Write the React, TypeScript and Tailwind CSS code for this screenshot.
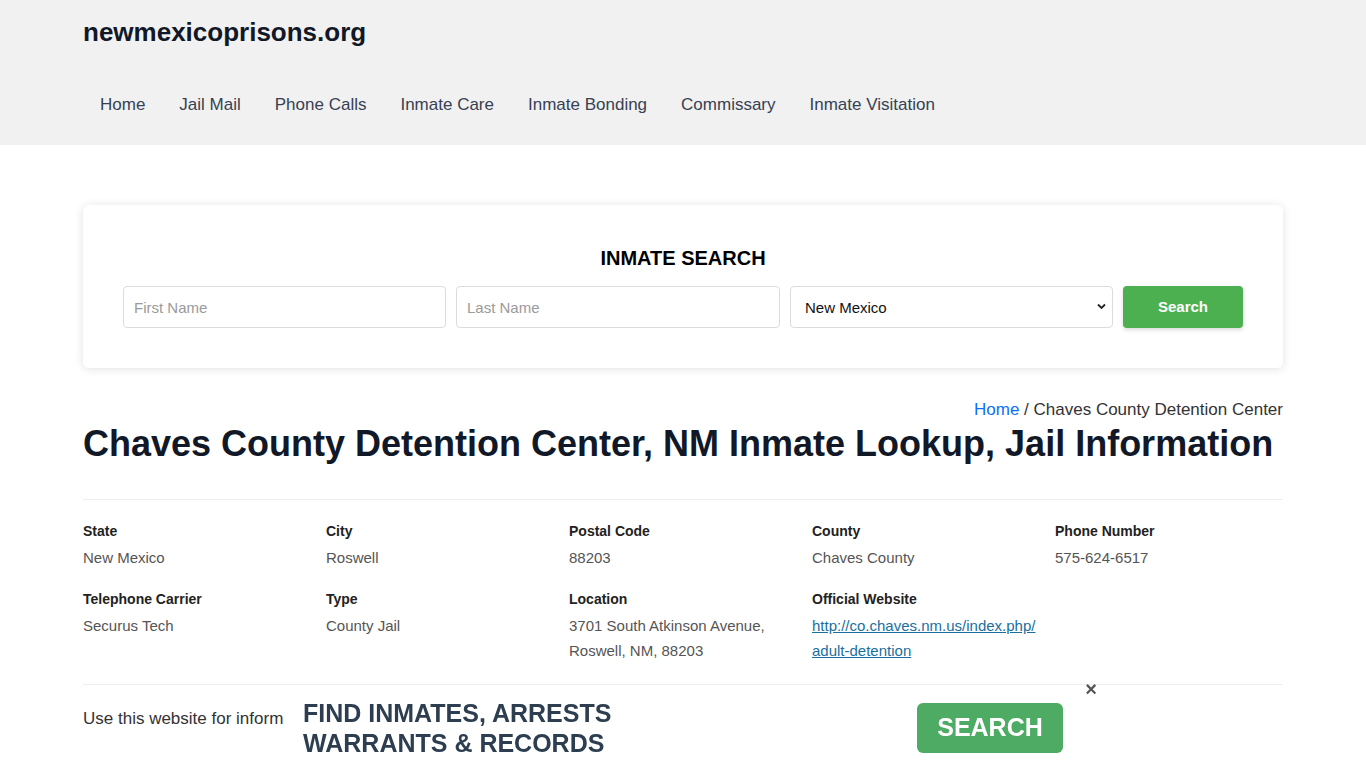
import React from "react";

const font = { fontFamily: '"Liberation Sans", Arial, sans-serif' };

const navItems = ["Home", "Jail Mail", "Phone Calls", "Inmate Care", "Inmate Bonding", "Commissary", "Inmate Visitation"];

type Field = { label: string; value: React.ReactNode };

const rowOne: Field[] = [
  { label: "State", value: "New Mexico" },
  { label: "City", value: "Roswell" },
  { label: "Postal Code", value: "88203" },
  { label: "County", value: "Chaves County" },
  { label: "Phone Number", value: "575-624-6517" },
];

const rowTwo: Field[] = [
  { label: "Telephone Carrier", value: "Securus Tech" },
  { label: "Type", value: "County Jail" },
  { label: "Location", value: "3701 South Atkinson Avenue, Roswell, NM, 88203" },
  {
    label: "Official Website",
    value: (
      <a href="#" className="text-[#1a6fa0] underline">
        http://co.chaves.nm.us/index.php/
        <br />
        adult-detention
      </a>
    ),
  },
];

function InfoRow({ fields }: { fields: Field[] }) {
  return (
    <div className="grid grid-cols-[243px_243px_243px_243px_243px]">
      {fields.map((f) => (
        <div key={f.label} className="pr-4">
          <div className="text-[14px] font-bold leading-[20px] text-[#222]">{f.label}</div>
          <div className="mt-[4px] text-[15px] leading-[25px] text-[#555]">{f.value}</div>
        </div>
      ))}
    </div>
  );
}

export default function App() {
  return (
    <div className="min-h-[768px] bg-white" style={font}>
      {/* header */}
      <header className="h-[145px] bg-[#f1f1f1]">
        <div className="mx-auto w-[1200px] pt-[16px]">
          <div className="text-[26px] font-bold leading-[32px] text-[#111827]">newmexicoprisons.org</div>
          <nav className="mt-[45px] flex">
            {navItems.map((n) => (
              <a key={n} href="#" className="px-[17px] text-[17px] leading-[24px] text-[#374151]">
                {n}
              </a>
            ))}
          </nav>
        </div>
      </header>

      <main className="mx-auto w-[1200px]">
        {/* search card */}
        <section className="mt-[60px] rounded-md bg-white px-[40px] pb-[40px] pt-[40px] shadow-[0_1px_10px_rgba(0,0,0,0.12)]">
          <h2 className="text-center text-[20px] font-bold leading-[26px] text-black">INMATE SEARCH</h2>
          <div className="mt-[15px] flex gap-[10px]">
            <input
              placeholder="First Name"
              className="h-[42px] w-[323px] rounded border border-[#dcdcdc] px-[10px] text-[15px] text-[#333] placeholder:text-[#9a9a9a]"
            />
            <input
              placeholder="Last Name"
              className="h-[42px] w-[324px] rounded border border-[#dcdcdc] px-[10px] text-[15px] text-[#333] placeholder:text-[#9a9a9a]"
            />
            <div className="relative h-[42px] w-[323px] rounded border border-[#dcdcdc] bg-white">
              <div className="px-[14px] pt-px text-[15px] leading-[40px] text-[#111]">New Mexico</div>
              <svg className="absolute right-[6px] top-[16px]" width="9" height="7" viewBox="0 0 9 7">
                <path d="M1 1.5 L4.5 5 L8 1.5" stroke="#222" strokeWidth="1.8" fill="none" />
              </svg>
            </div>
            <button className="h-[42px] w-[120px] rounded bg-[#4caf50] pt-px text-[15px] font-bold text-white shadow-[0_2px_4px_rgba(0,0,0,0.15)]">
              Search
            </button>
          </div>
        </section>

        {/* breadcrumb */}
        <div className="mt-[32px] text-right text-[17px] leading-[20px] text-[#333]">
          <a href="#" className="text-[#0d6efd]">Home</a> / Chaves County Detention Center
        </div>

        <h1 className="mt-0 text-[36px] font-bold leading-[48px] text-[#111827]">
          Chaves County Detention Center, NM Inmate Lookup, Jail Information
        </h1>

        <div className="mt-[31px] h-px bg-[#eeeeee]" />

        <div className="pt-[21px]">
          <InfoRow fields={rowOne} />
          <div className="mt-[19px]">
            <InfoRow fields={rowTwo} />
          </div>
        </div>

        <div className="mt-[21px] h-px bg-[#eeeeee]" />

        <div className="mt-[23px] w-[205px] overflow-hidden whitespace-nowrap text-[17px] leading-[22px] text-[#333]">
          Use this website for inform
        </div>
      </main>

      {/* bottom ad banner */}
      <div className="fixed bottom-0 left-[295px] flex h-[78px] w-[810px] items-center bg-white">
        <div className="pl-[8px] pb-[3px] text-[25px] font-bold uppercase leading-[30px] text-[#2d3e50]">
          Find Inmates, Arrests
          <br />
          Warrants &amp; Records
        </div>
        <button className="ml-auto mr-[42px] mb-[2px] h-[50px] w-[146px] rounded-md bg-[#4dab63] text-[25px] font-bold text-white">
          SEARCH
        </button>
        <span className="absolute right-[8px] top-[-11px] text-[20px] font-bold leading-[20px] text-[#555]">×</span>
      </div>
    </div>
  );
}
